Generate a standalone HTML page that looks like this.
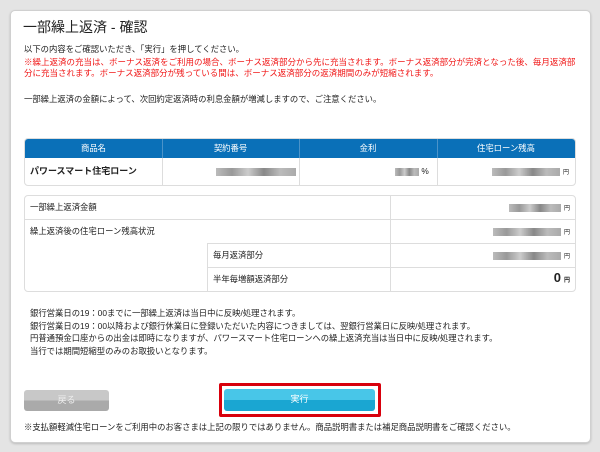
<!DOCTYPE html>
<html><head><meta charset="utf-8"><style>
body{margin:0;width:600px;height:452px;background:#e4e4e4;font-family:"Liberation Sans","Noto Sans CJK JP",sans-serif;position:relative;overflow:hidden;color:#222}
.card{position:absolute;left:10px;top:10px;width:579px;height:431px;background:#fff;border-radius:5px;border:1px solid #d0d0d0;box-shadow:0 1px 2px #bbb}
.a{position:absolute;white-space:nowrap;font-size:8.35px;line-height:12px}
.t{font-size:14px;left:23px;top:21px}
.red{color:#f01818;font-size:8.5px}
.box{position:absolute;border:1px solid #ddd;border-radius:4px;overflow:hidden}
.ln{position:absolute;background:#ddd}
.hln{position:absolute;background:#4b93c9;width:1px}
.blur{display:inline-block;height:8px;background:linear-gradient(90deg,#bbb,#999,#ccc,#888,#bbb,#aaa);vertical-align:middle}
.yen{font-size:6px;margin-left:3px}
.c{text-align:center;color:#fff}
</style></head><body>
<div class="card"></div>
<div class="a t">一部繰上返済 - 確認</div>
<div class="a" style="left:24px;top:43px">以下の内容をご確認いただき、「実行」を押してください。</div>
<div class="a red" style="left:24px;top:56px">※繰上返済の充当は、ボーナス返済をご利用の場合、ボーナス返済部分から先に充当されます。ボーナス返済部分が完済となった後、毎月返済部</div>
<div class="a red" style="left:24px;top:67px">分に充当されます。ボーナス返済部分が残っている間は、ボーナス返済部分の返済期間のみが短縮されます。</div>
<div class="a" style="left:24px;top:93px">一部繰上返済の金額によって、次回約定返済時の利息金額が増減しますので、ご注意ください。</div>

<div class="box" style="left:24px;top:138px;width:550px;height:46px">
<div style="position:absolute;left:0;top:0;width:550px;height:19px;background:#0a70b8"></div>
</div>
<div class="hln" style="left:162px;top:139px;height:19px"></div>
<div class="hln" style="left:299px;top:139px;height:19px"></div>
<div class="hln" style="left:437px;top:139px;height:19px"></div>
<div class="ln" style="left:162px;top:158px;width:1px;height:27px"></div>
<div class="ln" style="left:299px;top:158px;width:1px;height:27px"></div>
<div class="ln" style="left:437px;top:158px;width:1px;height:27px"></div>
<div class="a c" style="left:25px;width:137px;top:142px">商品名</div>
<div class="a c" style="left:162px;width:137px;top:142px">契約番号</div>
<div class="a c" style="left:299px;width:138px;top:142px">金利</div>
<div class="a c" style="left:437px;width:138px;top:142px">住宅ローン残高</div>
<div class="a" style="left:30px;top:165px;font-weight:bold;font-size:9px">パワースマート住宅ローン</div>
<div class="a" style="left:216px;top:165px"><span class="blur" style="width:80px"></span></div>
<div class="a" style="left:395px;top:165px"><span class="blur" style="width:24px"></span> %</div>
<div class="a" style="left:492px;top:165px"><span class="blur" style="width:68px"></span><span class="yen">円</span></div>

<div class="box" style="left:24px;top:195px;width:550px;height:95px"></div>
<div class="ln" style="left:25px;top:219px;width:550px;height:1px"></div>
<div class="ln" style="left:207px;top:243px;width:368px;height:1px"></div>
<div class="ln" style="left:207px;top:267px;width:368px;height:1px"></div>
<div class="ln" style="left:390px;top:196px;width:1px;height:95px"></div>
<div class="ln" style="left:207px;top:243px;width:1px;height:48px"></div>
<div class="a" style="left:30px;top:201px">一部繰上返済金額</div>
<div class="a" style="left:30px;top:225px">繰上返済後の住宅ローン残高状況</div>
<div class="a" style="left:213px;top:249px">毎月返済部分</div>
<div class="a" style="left:213px;top:273px">半年毎増額返済部分</div>
<div class="a" style="right:30px;top:201px"><span class="blur" style="width:52px"></span><span class="yen">円</span></div>
<div class="a" style="right:30px;top:225px"><span class="blur" style="width:68px"></span><span class="yen">円</span></div>
<div class="a" style="right:30px;top:249px"><span class="blur" style="width:68px"></span><span class="yen">円</span></div>
<div class="a" style="right:30px;top:272px;font-size:13px;font-weight:bold">0<span class="yen">円</span></div>

<div class="a" style="left:30px;top:307px">銀行営業日の19：00までに一部繰上返済は当日中に反映/処理されます。</div>
<div class="a" style="left:30px;top:320px">銀行営業日の19：00以降および銀行休業日に登録いただいた内容につきましては、翌銀行営業日に反映/処理されます。</div>
<div class="a" style="left:30px;top:332px">円普通預金口座からの出金は即時になりますが、パワースマート住宅ローンへの繰上返済充当は当日中に反映/処理されます。</div>
<div class="a" style="left:30px;top:345px">当行では期間短縮型のみのお取扱いとなります。</div>
<div style="position:absolute;left:24px;top:390px;width:85px;height:21px;border-radius:3px;background:linear-gradient(#c8c8c8 50%,#aaa 50%);color:#eee;font-size:9px;text-align:center;line-height:21px">戻る</div>
<div style="position:absolute;left:219px;top:383px;width:156px;height:28px;border:3px solid #d8000c;border-radius:2px"></div>
<div style="position:absolute;left:224px;top:389px;width:151px;height:22px;border-radius:3px;background:linear-gradient(#48c6e8 50%,#1aa6d2 50%);color:#fff;font-size:9px;text-align:center;line-height:20px">実行</div>
<div class="a" style="left:24px;top:421px">※支払額軽減住宅ローンをご利用中のお客さまは上記の限りではありません。商品説明書または補足商品説明書をご確認ください。</div>
</body></html>
